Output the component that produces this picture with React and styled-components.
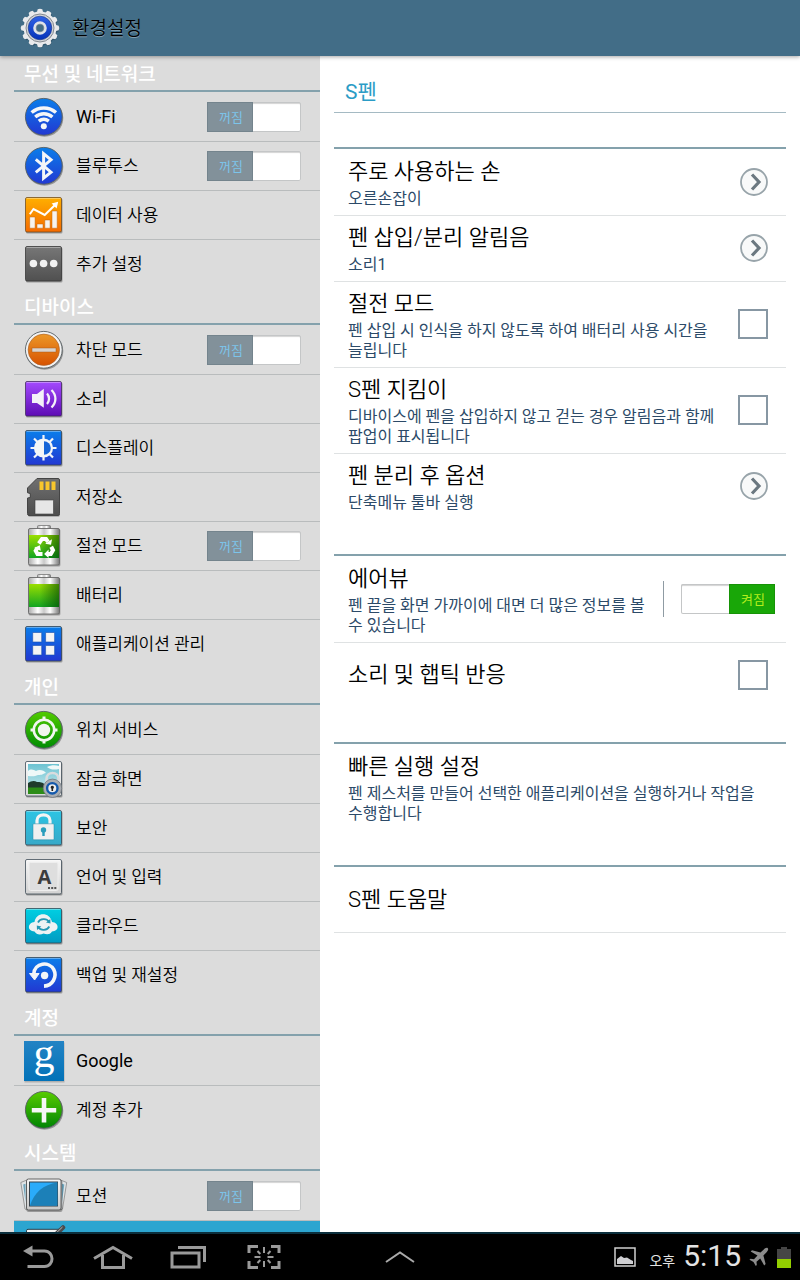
import React, { useId } from 'react';
import styled, { createGlobalStyle, css } from 'styled-components';

const GlobalStyle = createGlobalStyle`
  * { box-sizing: border-box; }
  html, body { margin: 0; padding: 0; }
  body {
    background: #fff;
    color: #000;
    font-family: Roboto, "Noto Sans CJK KR", sans-serif;
    font-weight: 350;
    word-break: keep-all;
  }
  button, input { font: inherit; }
  ul, h1, h2, h3, p { margin: 0; padding: 0; font-weight: inherit; }
  ul { list-style: none; }
`;

/* ---------- page frame ---------- */

const Page = styled.div`
  display: flex;
  flex-direction: column;
  height: 100vh;
  overflow: hidden;
`;

const ActionBar = styled.header`
  display: flex;
  flex: none;
  align-items: center;
  gap: 12px;
  height: 56px;
  padding-left: 20px;
  background: #426d87;
  z-index: 1;
  box-shadow: 0 1px 4px rgba(0, 0, 0, 0.35);
`;

const AppTitle = styled.h1`
  padding-top: 2px;
  font-size: 19px;
  line-height: 28px;
  text-shadow: 0 1px 0 rgba(255, 255, 255, 0.35);
`;

const Columns = styled.div`
  display: grid;
  grid-template-columns: 2fr 3fr;
  flex: 1;
  min-height: 0;
`;

/* ---------- sidebar ---------- */

const Sidebar = styled.nav`
  padding-left: 14px;
  overflow: hidden;
  background: #dcdcdc;
`;

const SectionTitle = styled.h2`
  height: 36px;
  padding: 2px 0 0 10px;
  border-bottom: 2px solid #84a1ac;
  color: #fff;
  font-size: 19px;
  font-weight: 500;
  line-height: 34px;
`;

const SectionList = styled.ul`
  padding-top: 1px;
`;

const SideRow = styled.li`
  display: flex;
  align-items: center;
  height: 49px;
  padding-right: 19px;
  border-bottom: 1px solid #b9bcbd;
  &:last-child { border-bottom-color: transparent; }
  ${(p) => p.$selected && css`background: #2ca5d0;`}
`;

const SideLink = styled.a`
  display: flex;
  flex: 1;
  align-items: center;
  gap: 8px;
  padding-left: 6px;
  color: #000;
  font-size: ${(p) => (p.$latin ? 18 : 17)}px;
  font-weight: ${(p) => (p.$latin ? 400 : 350)};
  line-height: 24px;
  text-decoration: none;
`;

const RowIcon = styled.svg`
  display: block;
  flex: none;
  width: 48px;
  height: 48px;
  overflow: visible;
`;

/* ---------- switch ---------- */

const SwitchTrack = styled.label`
  position: relative;
  display: flex;
  flex: none;
  justify-content: ${(p) => (p.$on ? 'flex-end' : 'flex-start')};
  width: 94px;
  height: 30px;
  border-radius: 2px;
  background: #fff;
  box-shadow: inset 0 0 0 1px #c4c6c7, inset 0 2px 1px #d4d4d4;
`;

const SwitchState = styled.span`
  width: 46px;
  height: 30px;
  padding-left: 2px;
  border: 1px solid ${(p) => (p.$on ? '#179307' : '#74848d')};
  background: ${(p) => (p.$on ? '#19a708' : '#82919a')};
  color: ${(p) => (p.$on ? '#b4ee1c' : '#7cc4ea')};
  font-size: 13px;
  font-weight: 400;
  line-height: 30px;
  text-align: center;
`;

const SwitchInput = styled.input`
  position: absolute;
  inset: 0;
  width: 100%;
  height: 100%;
  margin: 0;
  opacity: 0;
`;

function Switch({ on, name }) {
  return (
    <SwitchTrack $on={on}>
      <SwitchInput type="checkbox" role="switch" defaultChecked={on} aria-label={name} />
      <SwitchState $on={on}>{on ? '켜짐' : '꺼짐'}</SwitchState>
    </SwitchTrack>
  );
}

/* ---------- detail pane ---------- */

const Detail = styled.main`
  padding: 0 14px;
  overflow: hidden;
  background: #fff;
`;

const DetailTitle = styled.h2`
  height: 57px;
  padding: 14px 0 0 11px;
  border-bottom: 1px solid #a5bac3;
  color: #2b9cc6;
  font-size: 21px;
  font-weight: 400;
  line-height: 44px;
`;

const Group = styled.ul`
  margin-top: 34px;
  padding-top: 1px;
  border-top: 2px solid #84a1ac;
`;

const OptionRow = styled.li`
  display: flex;
  align-items: center;
  min-height: 65px;
  padding: ${(p) => (p.$edge ? '5px 11px 6px 14px' : '5px 18px 6px 14px')};
  border-bottom: 1px solid #dfe2e3;
  &:last-child { border-bottom-color: ${(p) => (p.$ruled ? '#dfe2e3' : 'transparent')}; }
`;

const OptionText = styled.div`
  flex: 1;
  padding-right: 12px;
`;

const OptionTitle = styled.h3`
  font-size: 22px;
  line-height: 34px;
  color: #000;
`;

const OptionNote = styled.p`
  font-size: 16px;
  font-weight: 400;
  line-height: 20px;
  color: #2c4a68;
`;

const Check = styled.input`
  appearance: none;
  flex: none;
  width: 30px;
  height: 30px;
  margin: 0;
  border: 2px solid #8797a3;
  background: #fff;
`;

const OpenButton = styled.button`
  flex: none;
  width: 28px;
  height: 28px;
  padding: 0;
  border: 0;
  background: none;
  svg { display: block; }
`;

const SwitchDivider = styled.span`
  flex: none;
  width: 1px;
  height: 36px;
  margin-right: 17px;
  background: #8f9ba3;
`;

/* ---------- system bar ---------- */

const SystemBar = styled.footer`
  display: grid;
  flex: none;
  grid-template-columns: 1fr auto 1fr;
  align-items: center;
  height: 48px;
  border-top: 2px solid #0b2f3d;
  background: #000;
`;

const NavButtons = styled.div`
  display: flex;
`;

const NavButton = styled.button`
  display: flex;
  align-items: center;
  justify-content: center;
  width: 75px;
  height: 46px;
  padding: 0;
  border: 0;
  background: none;
`;

const Status = styled.div`
  display: flex;
  align-items: center;
  justify-content: flex-end;
  padding-right: 9px;
  color: #e4e4e4;
`;

const Meridiem = styled.span`
  padding: 8px 8px 0 13px;
  font-size: 14px;
  font-weight: 400;
  line-height: 20px;
`;

const Clock = styled.time`
  padding-right: 8px;
  font-size: 30px;
  font-weight: 400;
  line-height: 38px;
  padding-bottom: 2px;
`;

const StatusIcon = styled.svg`
  display: block;
  flex: none;
  margin-right: ${(p) => p.$gap || 0}px;
`;

/* ---------- icons ---------- */

function Gradient({ id, from, to }) {
  return (
    <linearGradient id={id} x1="0" y1="0" x2="0" y2="1">
      <stop offset="0" stopColor={from} />
      <stop offset="1" stopColor={to} />
    </linearGradient>
  );
}

function Tile({ from, to, edge = '#34434f', children }) {
  const id = useId();
  return (
    <RowIcon viewBox="0 0 48 48" aria-hidden="true">
      <defs><Gradient id={id} from={from} to={to} /></defs>
      <rect x="6" y="7.5" width="36.5" height="35" rx="1.5" fill="#000" opacity=".3" />
      <rect x="5.5" y="6.5" width="36" height="34.500" rx="1.5" fill={`url(#${id})`} stroke={edge} strokeOpacity=".75" />
      <path d="M6.5 7.5h34" stroke="#fff" opacity=".35" />
      {children}
    </RowIcon>
  );
}

function Disc({ from, to, ring, children }) {
  const id = useId();
  return (
    <RowIcon viewBox="0 0 48 48" aria-hidden="true">
      <defs><Gradient id={id} from={from} to={to} /></defs>
      <circle cx="24.5" cy="25" r="18.8" fill="#000" opacity=".32" />
      <circle cx="23.8" cy="23.8" r="18.4" fill={ring ? '#f2f2f2' : `url(#${id})`} stroke="#555e62" strokeWidth=".9" />
      {ring && <circle cx="23.8" cy="23.8" r="15.7" fill={`url(#${id})`} stroke="#a9622c" strokeWidth=".6" />}
      {children}
    </RowIcon>
  );
}

const BLUE = { from: '#0a7eea', to: '#2238d2' };

const WifiIcon = () => (
  <Disc {...BLUE}>
    <g fill="none" stroke="#f4f6f8" strokeWidth="3.4">
      <path d="M11.6 19.6C18.6 13.4 29 13.4 36 19.6" />
      <path d="M15.2 24C20.4 19.6 27.3 19.6 32.4 24" />
      <path d="M18.8 28.2C21.9 25.8 25.8 25.8 28.8 28.2" />
    </g>
    <circle cx="23.8" cy="33.3" r="3" fill="#f4f6f8" />
  </Disc>
);

const BluetoothIcon = () => (
  <Disc {...BLUE}>
    <path d="M15.8 17.4 31 30.2 23.6 36.2V11.6L31 17.8 15.8 30.4" fill="none" stroke="#f4f6f8" strokeWidth="3" />
  </Disc>
);

const DataIcon = () => (
  <Tile from="#ffb000" to="#f56a00" edge="#6b4a20">
    <g fill="#f6f3ef" stroke="#c06408" strokeWidth=".5">
      <path d="M9.700 26h5.400v11.200H9.700zM17 33h6v4.200h-6zM24.800 29h5.300v8.200h-5.300zM32 20h5.200v17.200H32z" />
    </g>
    <path d="M9.800 23.300 13.500 18l11.200 6L35.500 13.500" fill="none" stroke="#fff" strokeWidth="2" />
    <path d="m31.600 12.600 6.600-1.800-1.600 6.800z" fill="#fff" />
  </Tile>
);

const MoreIcon = () => (
  <Tile from="#777" to="#505050" edge="#333">
    <circle cx="13.400" cy="23.500" r="3.800" fill="#f2f2f2" />
    <circle cx="23.600" cy="23.500" r="3.800" fill="#f2f2f2" />
    <circle cx="33.700" cy="23.500" r="3.800" fill="#f2f2f2" />
  </Tile>
);

const BlockIcon = () => (
  <Disc from="#ec9828" to="#d75200" ring>
    <rect x="12" y="22" width="24" height="4" fill="#d9d4cf" stroke="#a85a1a" strokeWidth=".5" />
  </Disc>
);

const SoundIcon = () => (
  <Tile from="#a44bff" to="#5e0cb4" edge="#3e2a58">
    <path d="M12 19h5l6.800-5.200v19L17 28h-5z" fill="#f4f1f8" />
    <path d="M27 18.500c2.700 3 2.700 7.500 0 10.500M31.500 15c5.200 5.200 5.200 12.500 0 17.500" fill="none" stroke="#f4f1f8" strokeWidth="2.300" />
  </Tile>
);

const DisplayIcon = () => (
  <Tile {...BLUE}>
    <path d="M23.500 11v5M23.500 31.500v5M10.500 24h5M31.500 24h5M14 14.500l4 4M29 29.500l4 4M33 14.500l-4 4M18 29.500l-4 4" stroke="#f4f6f8" strokeWidth="2.200" />
    <circle cx="23.500" cy="24" r="9.600" fill="#f4f6f8" />
    <path d="M24 17.200a6.800 6.800 0 0 1 0 13.600z" fill="#1766d8" />
  </Tile>
);

const StorageIcon = () => {
  const id = useId();
  return (
    <RowIcon viewBox="0 0 48 48" aria-hidden="true">
      <defs><Gradient id={id} from="#707070" to="#4c4c4c" /></defs>
      <path d="M17.500 6.500H38.500q1.500 0 1.500 1.500v34q0 1.800-1.500 1.800H9.500Q8 43.800 8 42V26l2-1.500V21l-2.500-1.500V15.500z" fill="#000" opacity=".28" />
      <path d="M17 5.500h21q1.500 0 1.500 1.500V40.500q0 2-1.500 2H9q-1.500 0-1.500-2V25l2.800-.5v-4l-2.800-.8V15z" fill={`url(#${id})`} stroke="#444" />
      <path d="M19.500 8.500h4v8.500h-4zM25.500 8.500h4v8.500h-4zM31.500 8.500h4v8.500h-4z" fill="#f8c62c" />
      <rect x="15" y="27" width="18.500" height="14" fill="#e6e6e6" stroke="#3f3f3f" strokeWidth=".6" />
    </RowIcon>
  );
};

function BatteryShell({ children }) {
  const id = useId();
  return (
    <RowIcon viewBox="0 0 48 48" aria-hidden="true">
      <defs>
        <linearGradient id={`${id}m`}>
          <stop offset="0" stopColor="#aaa" /><stop offset=".3" stopColor="#fff" />
          <stop offset=".5" stopColor="#c9c9c9" /><stop offset=".7" stopColor="#fff" />
          <stop offset="1" stopColor="#777" />
        </linearGradient>
        <Gradient id={`${id}g`} from="#9bdf00" to="#12a522" />
        <linearGradient id={`${id}s`}>
          <stop offset=".35" stopColor="#004000" stopOpacity="0" /><stop offset="1" stopColor="#004000" stopOpacity=".6" />
        </linearGradient>
      </defs>
      <rect x="8.600" y="7" width="31.800" height="37.500" rx="1.500" fill="#000" opacity=".28" />
      <rect x="17.500" y="3.500" width="13" height="4" rx="1" fill={`url(#${id}m)`} stroke="#777" strokeWidth=".8" />
      <rect x="8.500" y="6.500" width="31" height="36.500" rx="1.500" fill={`url(#${id}m)`} stroke="#666" strokeWidth=".9" />
      <rect x="9" y="13" width="30" height="23" fill={`url(#${id}g)`} />
      <rect x="9" y="13" width="30" height="23" fill={`url(#${id}s)`} />
      {children}
    </RowIcon>
  );
}

const PowerSaveIcon = () => (
  <BatteryShell>
    <g fill="none" stroke="#fff" strokeWidth="4">
      <path d="m18.800 21.500 3.200-4.600h4l2 3" />
      <path d="m31.200 24.800 1.800 3.400-2.200 3.800h-3" />
      <path d="M22.500 32h-5l-1.800-3.300 1.800-3" />
    </g>
    <path d="m25.200 21.700 5.800 1 1-5.400zM28.600 27.600l-4.500 4.300 4.500 4zM14 26l5.800-2.800 1 5.600z" fill="#fff" />
  </BatteryShell>
);

const BatteryIcon = () => <BatteryShell />;

const AppsIcon = () => (
  <Tile {...BLUE}>
    <path d="M12.700 12.500h9v9.500h-9zM25.600 12.500h9v9.500h-9zM12.700 25.500h9v9.500h-9zM25.600 25.500h9v9.500h-9z" fill="#f4f4f4" stroke="#154fae" strokeWidth=".6" />
  </Tile>
);

const LocationIcon = () => (
  <Disc from="#52cc00" to="#018c04">
    <circle cx="24" cy="24" r="10.200" fill="none" stroke="#f2f6f0" strokeWidth="2.600" />
    <circle cx="24" cy="24" r="6.200" fill="#f2f6f0" />
    <path d="M24 10.500v4M24 33.500v4M10.500 24h4M33.500 24h4" stroke="#f2f6f0" strokeWidth="3" />
  </Disc>
);

const LockScreenIcon = () => {
  const id = useId();
  return (
    <Tile from="#fafafa" to="#d8d8d8">
      <defs><Gradient id={id} from="#6cc3d2" to="#d2edf0" /></defs>
      <rect x="8" y="9" width="31" height="30" fill={`url(#${id})`} />
      <path d="M8 16c3-3 6-1 8 0 3-2 8-1 10 2-4 1-3 2-8 2-4 2-7 1-10 1zM27 12c4-2 8-2 12-1v3c-5 1-8 1-12-2z" fill="#eef8f8" />
      <path d="M8 28c3-2 6-3 9-1 3 0 6 0 8 3h14v3H8z" fill="#1f3a2c" />
      <path d="M8 32.500h31V39H8z" fill="#2c8c17" />
      <path d="M26.500 29v-5c0-8 12-8 12 0v5" fill="none" stroke="#d9dcde" strokeWidth="2.600" />
      <circle cx="32.500" cy="33.300" r="9.200" fill="#a9adb2" stroke="#72777d" strokeWidth=".8" />
      <circle cx="32.300" cy="33.300" r="5.200" fill="#eee" stroke="#1459ac" strokeWidth="2.400" />
      <path d="M32.300 30.800a1.600 1.600 0 0 1 .8 3v2.300h-1.600v-2.300a1.600 1.600 0 0 1 .8-3z" fill="#222" />
    </Tile>
  );
};

const SecurityIcon = () => (
  <Tile from="#2cc4e4" to="#38a9c8">
    <path d="M17 21v-4.500c0-7.500 13-7.500 13 0V21" fill="none" stroke="#f4f4f4" strokeWidth="3.200" />
    <rect x="13" y="19.800" width="21" height="16" rx=".8" fill="#f0f0f0" stroke="#2489a5" strokeWidth=".5" />
    <circle cx="23.500" cy="26" r="2.700" fill="#2a9dbc" />
    <path d="M22.300 27h2.400v5h-2.400z" fill="#2a9dbc" />
  </Tile>
);

const Letter = styled.text`
  font-family: ${(p) => p.$face};
  font-size: ${(p) => p.$size}px;
  font-weight: ${(p) => p.$weight};
`;

const LanguageIcon = () => (
  <Tile from="#f6f6f6" to="#d2d2d2">
    <rect x="9" y="9.500" width="29" height="28" rx="1.500" fill="#dedede" stroke="#eee" />
    <Letter x="24.300" y="31" textAnchor="middle" fill="#3c3c3c" $face='"Open Sans", sans-serif' $size={20} $weight={700}>A</Letter>
    <path d="M28 34h2v2h-2zM31.200 34h2v2h-2zM34.300 34h2v2h-2z" fill="#555" />
  </Tile>
);

const CloudIcon = () => (
  <Tile from="#00cfe2" to="#019bc2">
    <path d="M14.500 29.500c-7.500 0-7.500-9 0-9.500C16 9.500 30 9.500 32 20c7.500.5 7.500 9.500 0 9.500-2 3.500-5.500 3-8.500 2-3 1.500-7 1.500-9-2z" fill="#eef2f3" />
    <path d="M18 20.500c2-4 8.500-4.500 11-.8M29.300 24.500c-2 4-8.500 4.500-11 .8" fill="none" stroke="#2597b3" strokeWidth="1.700" />
    <path d="m30.300 17 .2 4.600-4.500-1.200zM17 28l-.2-4.600 4.500 1.200z" fill="#2597b3" />
  </Tile>
);

const BackupIcon = () => (
  <Tile {...BLUE}>
    <path d="M13.800 23c.6-11.500 15.500-13 20-4.300 3.600 7.300-1.300 16-9.800 16.400" fill="none" stroke="#f4f6f8" strokeWidth="3.600" />
    <path d="M9.500 22.500h9.600L14.600 29z" fill="#f4f6f8" stroke="#f4f6f8" />
    <circle cx="24.600" cy="24.500" r="3.700" fill="#f4f6f8" />
  </Tile>
);

const GoogleIcon = () => {
  const id = useId();
  return (
    <RowIcon viewBox="0 0 48 48" aria-hidden="true">
      <defs><Gradient id={id} from="#2383c4" to="#0272b8" /></defs>
      <rect x="4.500" y="5.500" width="40" height="40" fill="#000" opacity=".2" />
      <rect x="4" y="4" width="40" height="40" fill={`url(#${id})`} />
      <Letter x="24" y="30" textAnchor="middle" fill="#fff" $face='"Liberation Serif", serif' $size={42} $weight={400}>g</Letter>
    </RowIcon>
  );
};

const AddIcon = () => (
  <Disc from="#58cc00" to="#008404">
    <path d="M24 12v24.500M11.800 24.200h24.400" stroke="#f6f6f6" strokeWidth="4.600" />
  </Disc>
);

const MotionIcon = () => {
  const id = useId();
  return (
    <RowIcon viewBox="0 0 48 48" aria-hidden="true">
      <defs><Gradient id={id} from="#f5f5f5" to="#c8c8c8" /></defs>
      <path d="M.8 10.500 7 8v30l-2-1zM46.700 10.500 40.500 8v30l2-1z" fill="#dfe3e5" stroke="#888" strokeWidth=".8" />
      <path d="m3.200 12.500 2.300-.8V30zM44.300 12.500l-2.300-.8V30z" fill="#6fa5bc" />
      <rect x="6.500" y="8" width="36" height="32" rx="2" fill="#000" opacity=".3" />
      <rect x="6.500" y="7" width="34.500" height="31" rx="2" fill={`url(#${id})`} stroke="#555" strokeWidth=".9" />
      <rect x="9.500" y="10" width="28" height="24" fill="#2aabfa" stroke="#34424c" />
      <path d="M37.500 10.500V33.500H10C14 21 23 12.500 37.500 10.500z" fill="#1c80b8" />
    </RowIcon>
  );
};

const PenIcon = () => (
  <RowIcon viewBox="0 0 48 48" aria-hidden="true">
    <rect x="6.500" y="8.300" width="34" height="34" rx="1.500" fill="#f3f3f3" stroke="#2b3f4a" />
    <path d="M43 6.500 30 19" stroke="#4a4a4c" strokeWidth="4.500" strokeLinecap="round" />
    <path d="M42.500 6 31 17" stroke="#b7b7b7" strokeWidth="1" />
  </RowIcon>
);

const GearShape = styled.svg`
  display: block;
  width: 40px;
  height: 42px;
`;

function GearIcon() {
  const id = useId();
  const teeth = Array.from({ length: 12 }, (_, i) => i * 30);
  return (
    <GearShape viewBox="0 0 40 42" aria-hidden="true">
      <defs><Gradient id={id} from="#2f62e6" to="#0632b8" /></defs>
      <g fill="#1f3d50" opacity=".5">
        <circle cx="20.500" cy="22" r="16.500" />
        {teeth.map((a) => <rect key={a} x="17.500" y="3.500" width="6" height="6" rx="2" transform={`rotate(${a} 20.500 22)`} />)}
      </g>
      <g fill="#e9eaec">
        {teeth.map((a) => <path key={a} d="M16.500 7l1.200-4.700q2.300-1.200 4.600 0L23.500 7z" transform={`rotate(${a} 20 21)`} />)}
        <circle cx="20" cy="21" r="16.500" />
      </g>
      <circle cx="20" cy="21" r="14" fill="#d3d5d8" stroke="#858a90" strokeWidth="1" />
      <circle cx="20" cy="21" r="11.800" fill={`url(#${id})`} stroke="#1a3683" strokeWidth=".6" />
      <circle cx="20" cy="21" r="5.300" fill="#426d87" stroke="#dfe3e8" strokeWidth="3" />
      <circle cx="20" cy="21" r="3.900" fill="none" stroke="#6d7b86" strokeWidth=".6" />
    </GearShape>
  );
}

const ChevronIcon = () => (
  <svg width="28" height="28" viewBox="0 0 28 28" aria-hidden="true">
    <circle cx="14" cy="14" r="13" fill="#f8f9f9" stroke="#98a4aa" strokeWidth="1.800" />
    <path d="M12 6.500 19 14l-7 7.500" fill="none" stroke="#6b7880" strokeWidth="3.200" />
  </svg>
);

/* ---------- data ---------- */

const SECTIONS = [
  { title: '무선 및 네트워크', items: [
    { label: 'Wi-Fi', Icon: WifiIcon, toggle: true, latin: true },
    { label: '블루투스', Icon: BluetoothIcon, toggle: true },
    { label: '데이터 사용', Icon: DataIcon },
    { label: '추가 설정', Icon: MoreIcon },
  ] },
  { title: '디바이스', items: [
    { label: '차단 모드', Icon: BlockIcon, toggle: true },
    { label: '소리', Icon: SoundIcon },
    { label: '디스플레이', Icon: DisplayIcon },
    { label: '저장소', Icon: StorageIcon },
    { label: '절전 모드', Icon: PowerSaveIcon, toggle: true },
    { label: '배터리', Icon: BatteryIcon },
    { label: '애플리케이션 관리', Icon: AppsIcon },
  ] },
  { title: '개인', items: [
    { label: '위치 서비스', Icon: LocationIcon },
    { label: '잠금 화면', Icon: LockScreenIcon },
    { label: '보안', Icon: SecurityIcon },
    { label: '언어 및 입력', Icon: LanguageIcon },
    { label: '클라우드', Icon: CloudIcon },
    { label: '백업 및 재설정', Icon: BackupIcon },
  ] },
  { title: '계정', items: [
    { label: 'Google', Icon: GoogleIcon, latin: true },
    { label: '계정 추가', Icon: AddIcon },
  ] },
  { title: '시스템', items: [
    { label: '모션', Icon: MotionIcon, toggle: true },
    { label: '', Icon: PenIcon, selected: true },
  ] },
];

const GROUPS = [
  [
    { title: '주로 사용하는 손', note: '오른손잡이', kind: 'open' },
    { title: '펜 삽입/분리 알림음', note: '소리1', kind: 'open' },
    { title: '절전 모드', note: '펜 삽입 시 인식을 하지 않도록 하여 배터리 사용 시간을 늘립니다', kind: 'check' },
    { title: 'S펜 지킴이', note: '디바이스에 펜을 삽입하지 않고 걷는 경우 알림음과 함께 팝업이 표시됩니다', kind: 'check' },
    { title: '펜 분리 후 옵션', note: '단축메뉴 툴바 실행', kind: 'open' },
  ],
  [
    { title: '에어뷰', note: '펜 끝을 화면 가까이에 대면 더 많은 정보를 볼 수 있습니다', kind: 'switch' },
    { title: '소리 및 햅틱 반응', kind: 'check' },
  ],
  [{ title: '빠른 실행 설정', note: '펜 제스처를 만들어 선택한 애플리케이션을 실행하거나 작업을 수행합니다' }],
  [{ title: 'S펜 도움말', ruled: true }],
];

function Option({ title, note, kind, ruled }) {
  const id = useId();
  return (
    <OptionRow $edge={kind === 'switch'} $ruled={ruled}>
      <OptionText>
        <OptionTitle id={id}>{title}</OptionTitle>
        {note && <OptionNote>{note}</OptionNote>}
      </OptionText>
      {kind === 'open' && <OpenButton type="button" aria-labelledby={id}><ChevronIcon /></OpenButton>}
      {kind === 'check' && <Check type="checkbox" aria-labelledby={id} />}
      {kind === 'switch' && <><SwitchDivider /><Switch on name={title} /></>}
    </OptionRow>
  );
}

export default function App() {
  return (
    <>
      <GlobalStyle />
      <Page>
        <ActionBar>
          <GearIcon />
          <AppTitle>환경설정</AppTitle>
        </ActionBar>
        <Columns>
          <Sidebar>
            {SECTIONS.map((section) => (
              <section key={section.title}>
                <SectionTitle>{section.title}</SectionTitle>
                <SectionList>
                  {section.items.map(({ label, Icon, toggle, latin, selected }) => (
                    <SideRow key={label} $selected={selected}>
                      <SideLink href="#" $latin={latin}><Icon />{label}</SideLink>
                      {toggle && <Switch name={label} />}
                    </SideRow>
                  ))}
                </SectionList>
              </section>
            ))}
          </Sidebar>
          <Detail>
            <DetailTitle>S펜</DetailTitle>
            {GROUPS.map((group) => (
              <Group key={group[0].title}>
                {group.map((option) => <Option key={option.title} {...option} />)}
              </Group>
            ))}
          </Detail>
        </Columns>
        <SystemBar>
          <NavButtons>
            <NavButton type="button" aria-label="뒤로">
              <svg width="34" height="28" viewBox="0 0 34 28" fill="none" stroke="#9a9a9a" strokeWidth="3">
                <path d="M9 8h14.500c10 0 10 15.500 0 15.500H6.500" />
                <path d="M2 8l9.500-5.500v11z" fill="#9a9a9a" stroke="none" />
              </svg>
            </NavButton>
            <NavButton type="button" aria-label="홈">
              <svg width="40" height="26" viewBox="0 0 40 26" fill="none" stroke="#9a9a9a" strokeWidth="3">
                <path d="M1 14.500 20 3.500l19 11M9.500 11v12.500h21V11" />
              </svg>
            </NavButton>
            <NavButton type="button" aria-label="최근 실행">
              <svg width="36" height="26" viewBox="0 0 36 26" fill="none" stroke="#9a9a9a" strokeWidth="3">
                <path d="M2 9h27v14H2zM8 3.500h26.500v14.500" />
              </svg>
            </NavButton>
            <NavButton type="button" aria-label="화면 캡처">
              <svg width="36" height="26" viewBox="-1 0 36 26" fill="none" stroke="#9a9a9a" strokeWidth="3">
                <path d="M12 2.500H3V9M25 2.500h8V9M3 17v6.500h9M33 17v6.500h-8" />
                <path d="M18 3v6M18 17v6M8.500 13h6M21.500 13h6M11.500 7l2.800 3M24.500 7l-2.800 3M11.500 19l2.800-3M24.500 19l-2.800-3" strokeWidth="2" />
              </svg>
            </NavButton>
          </NavButtons>
          <NavButton type="button" aria-label="빠른 실행">
            <svg width="30" height="14" viewBox="0 0 30 14" fill="none" stroke="#aaa" strokeWidth="2">
              <path d="M1 12 15 2.500 29 12" />
            </svg>
          </NavButton>
          <Status>
            <StatusIcon width="22" height="20" viewBox="0 0 22 20" aria-hidden="true">
              <rect x="1" y="1" width="20" height="18" fill="none" stroke="#d0d0d0" strokeWidth="1.500" />
              <path d="M3 17v-5l4-3 3 2 3-.5 4 2.500 2 1v3z" fill="#cfcfd2" />
            </StatusIcon>
            <Meridiem>오후</Meridiem>
            <Clock>5:15</Clock>
            <StatusIcon $gap={8} width="20" height="20" viewBox="0 0 20 20" aria-hidden="true">
              <path d="M18.800 1.200c-1.200-1-3 .2-4 1.200L11.500 5.600 3 3.200 1.700 4.600l6.800 4L5 12.300l-3.500-.5-1 1 4 2.300 2.300 4 1-1L7.500 14.800 11.200 11.400l4 7 1.400-1.400-2.200-8.500 3.200-3.300c1-1 2.200-2.800 1.200-4z" fill="#8c8c8c" />
            </StatusIcon>
            <StatusIcon width="14" height="21" viewBox="0 0 14 21" aria-hidden="true">
              <path d="M4 0h6v2h4v10H0V2h4z" fill="#454545" />
              <path d="M0 12h14v9H0z" fill="#93cf00" />
            </StatusIcon>
          </Status>
        </SystemBar>
      </Page>
    </>
  );
}
